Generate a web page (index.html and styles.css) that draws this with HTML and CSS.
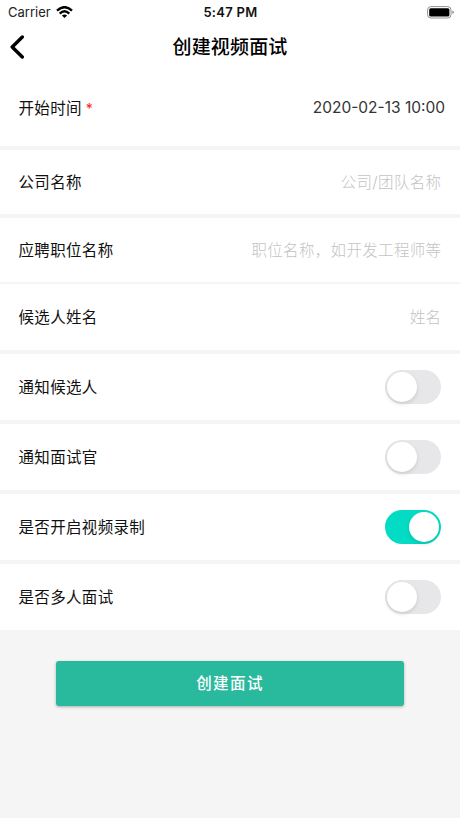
FILE: index.html
```html
<!DOCTYPE html>
<html lang="zh-CN">
<head>
<meta charset="utf-8">
<title>创建视频面试</title>
<link rel="stylesheet" href="styles.css">
</head>
<body>
<div class="status">
  <div class="carrier"><span>Carrier</span>
    <svg width="17" height="13" viewBox="0 0 17 13"><g fill="none" stroke="#000" stroke-width="2.4"><path d="M1 4.600Q8.500 -2.300 16 4.600"/><path d="M3.700 7.600Q8.500 3.100 13.300 7.600"/></g><path d="M5.900 9.500Q8.500 7.300 11.100 9.500L8.500 12.100Z"/></svg>
  </div>
  <div class="clock">5:47 PM</div>
  <div class="power"><svg width="28" height="13" viewBox="0 0 28 13"><rect x=".6" y=".6" width="23.400" height="11.400" rx="3.300" fill="#fff" stroke="#929292"/><rect x="2.200" y="2.200" width="20.200" height="8.200" rx="1.500"/><path d="M25.300 4.500Q27 5 27 6.300T25.300 8.100Z" fill="#929292"/></svg></div>
</div>
<header class="nav">
  <svg class="back" width="16" height="24" viewBox="0 0 16 24"><path d="M13.300 2L3.200 12L13.300 22" fill="none" stroke="#000" stroke-width="3.400" stroke-linecap="round" stroke-linejoin="round"/></svg>
  <h1 class="title">创建视频面试</h1>
</header>
<main class="form">
  <div class="row first"><div class="label">开始时间<span class="star">*</span></div><div class="date">2020-02-13 10:00</div></div>
  <div class="row text"><div class="label">公司名称</div><div class="hint">公司/团队名称</div></div>
  <div class="row text tight"><div class="label">应聘职位名称</div><div class="hint">职位名称，如开发工程师等</div></div>
  <div class="row"><div class="label">候选人姓名</div><div class="hint">姓名</div></div>
  <div class="row"><div class="label">通知候选人</div><div class="switch"></div></div>
  <div class="row"><div class="label">通知面试官</div><div class="switch"></div></div>
  <div class="row"><div class="label">是否开启视频录制</div><div class="switch on"></div></div>
  <div class="row"><div class="label">是否多人面试</div><div class="switch"></div></div>
</main>
<button class="submit">创建面试</button>
</body>
</html>
```
FILE: styles.css
```css
* { box-sizing: border-box; }
body { margin: 0; min-height: 818px; background: #f5f5f5; color: #111; font-family: Inter, "Noto Sans CJK SC", sans-serif; }
svg { display: block; }
.status { height: 24px; display: grid; grid-template-columns: 1fr auto 1fr; align-items: center; padding: 0 5px 0 8px; background: #fff; font-size: 13px; }
.carrier { display: flex; align-items: center; gap: 5px; color: #222; letter-spacing: 0; }
.clock { font-weight: 600; letter-spacing: .3px; margin-left: -2px; }
.power { justify-self: end; }
.nav { height: 46px; display: grid; grid-template-columns: 40px 1fr 40px; align-items: center; padding: 0 9px 1px; background: #fff; }
.title { margin: 0; padding-top: 2px; text-align: center; font-size: 19px; font-weight: 500; letter-spacing: .15px; line-height: 28px; color: #000; }
.row { height: 66px; margin-bottom: 4px; padding: 0 19px 0 18.500px; display: flex; align-items: center; justify-content: space-between; background: #fff; font-size: 15.500px; line-height: 24px; }
.row:last-child { margin-bottom: 0; }
.first { height: 76px; padding-right: 15px; }
.text { height: 64px; }
.tight { margin-bottom: 2px; }
.label, .hint { letter-spacing: .33px; padding-top: 1px; }
.hint { color: #c3c3c5; font-weight: 300; margin-right: -.4px; }
.star { color: #f22; margin-left: 4px; font-size: 14px; }
.date { color: #333; font-size: 15.500px; }
.switch { width: 56px; height: 34px; border-radius: 17px; padding: 2px; display: flex; background: #e7e7e9; }
.switch::before { content: ""; width: 30px; height: 30px; border-radius: 50%; background: #fff; box-shadow: 0 2px 4px rgba(0,0,0,.12); }
.on { background: #04dbc4; justify-content: flex-end; }
.submit { display: block; width: 348px; height: 45px; margin: 31px auto 0; padding: 0; border: 0; border-radius: 3px; background: #29b99d; color: #fff; font: 500 15.500px/24px Inter, "Noto Sans CJK SC", sans-serif; letter-spacing: 1.400px; box-shadow: 0 1px 3px rgba(0,0,0,.3); }
```
